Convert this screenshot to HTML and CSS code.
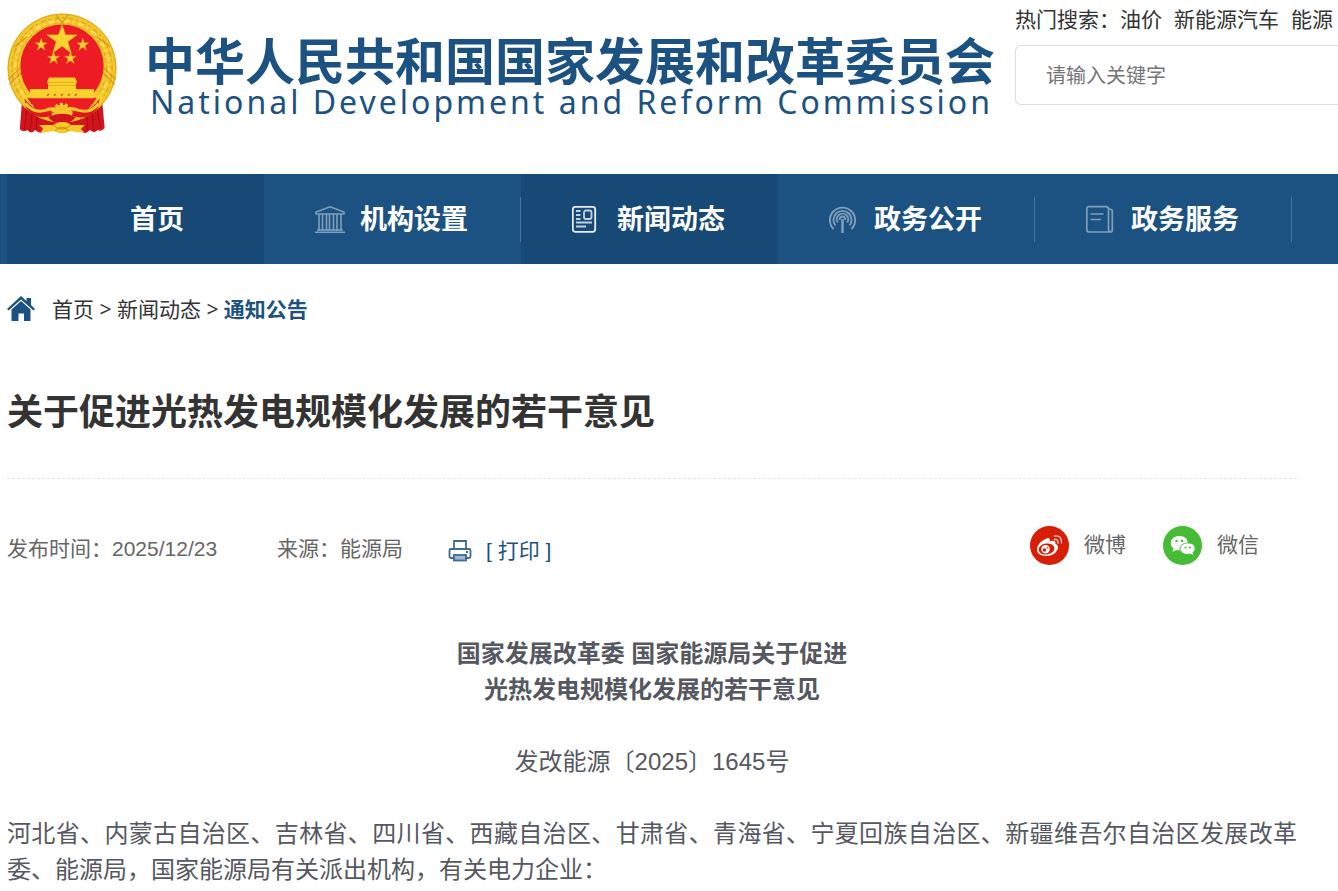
FILE: index.html
```html
<!DOCTYPE html>
<html lang="zh-CN">
<head>
<meta charset="utf-8">
<meta name="viewport" content="width=device-width, initial-scale=1">
<title>关于促进光热发电规模化发展的若干意见</title>
<link rel="stylesheet" href="styles.css">
</head>
<body>
<header class="header">
  <a class="brand" href="#">
    <svg class="emblem" viewBox="7 8 111 122" aria-hidden="true">
      <path d="M22 92 L19.500 125 Q23 129 27 126 Q31 131 35 126 Q39 130 43 128 L62 119 L82 128 Q86 131 90 126 Q95 130 98 126 Q102 128 105 124 L102 92Z" fill="#d3141d"/>
      <path d="M27 103 l-3 22 M32 107 l-2 20 M37 108 l-1 18 M97 103 l4 21 M92 107 l2 20 M87 108 l1 18" stroke="#a81016" stroke-width="1.2" fill="none"/>
      <circle cx="62" cy="63.500" r="55" fill="#f2c52c"/>
      <circle cx="62" cy="63.500" r="54.300" fill="none" stroke="#dfa921" stroke-width="1"/>
      <circle cx="62" cy="63.500" r="50.500" fill="none" stroke="#dba520" stroke-width="1.300" stroke-dasharray="2 4 5 3"/>
      <circle cx="62" cy="63.500" r="47.500" fill="none" stroke="#fadc55" stroke-width="2.500" stroke-dasharray="6 3 2 4"/>
      <circle cx="62" cy="63.500" r="45" fill="none" stroke="#dba520" stroke-width="1" stroke-dasharray="4 3"/>
      <path d="M8 75 L20 63 M9 80 L21 68 M116 75 L104 63 M115 80 L103 68 M14 42 L27 32 M110 42 L97 32 M56 10 L62 18 L68 10" stroke="#cf9a1a" stroke-width="1.200" fill="none"/>
      <circle cx="62" cy="61.500" r="42" fill="#ed1c24"/>
      <g fill="#fbd22f" stroke="#d99b1e" stroke-width=".4">
        <path d="M62 19 L65.600 30 H77.500 L68 37 L71.500 48.500 L62 41.500 L52.500 48.500 L56 37 L46.500 30 H58.400Z"/>
        <path id="star" d="M41 33.500 L42.500 38 H47 L43.300 40.800 L44.800 45.500 L41 42.500 L37 45.500 L38.600 40.800 L35 38 H39.500Z"/>
        <use href="#star" x="42" y="0"/>
        <use href="#star" x="12.500" y="13.500"/>
        <use href="#star" x="29.500" y="13.500"/>
      </g>
      <path d="M49 73 H75 L77 77 V79 H76 V85 H94 V91 H104 L101 99 H24 L21 91 H30 V85 H48 V79 H47 V77Z" fill="#fbd12d"/>
      <path d="M47 78 H77 M48 81 H76 M30 87 H94" stroke="#dba520" stroke-width=".8"/>
      <path d="M27 93.500 H97 L93 100 H31Z" fill="#ed1c24"/>
      <path d="M30 85 H94 V94 H30Z" fill="#fbd12d"/>
      <path d="M47 91.500 l2-2 m5 2 l2-2 m5 2 l2-2 m5 2 l2-2 m5 2 l2-2" stroke="#c9561b" stroke-width="1.300"/>
      <path d="M31 98 H93 L87 108 Q77 112 71 106 L53 106 Q45 113 36 107Z" fill="#ed1c24"/>
      <path d="M24 94 Q34 108 47 108 Q54 107 62 113 Q70 107 77 108 Q91 108 100 94 L98 104 Q88 117 74 112 Q67 114 62 118 Q57 114 50 112 Q34 116 26 104Z" fill="#dc171e"/>
      <circle cx="62" cy="109" r="8.500" fill="#f2c12a"/>
      <circle cx="62" cy="109" r="9" fill="none" stroke="#fbd22f" stroke-width="3" stroke-dasharray="3 2"/>
      <path d="M25 99 Q34 110 46 106 Q56 102 62 110 Q68 102 78 106 Q91 110 99 99" fill="none" stroke="#f6c928" stroke-width="3"/>
      <path d="M48 113 Q62 106 76 113 Q70 120 62 119 Q54 120 48 113Z" fill="#d3141d"/>
      <path d="M39 121 L53 121 Q58 117 62 118 Q67 117 71 121 L85 121 L81 125 L85 129 L70 127 Q62 132 54 127 L40 129 L43 125Z" fill="#f6c928"/>
      <path d="M53 121 Q62 129 71 121 M55 127 Q62 119 69 127" stroke="#cb8b16" fill="none"/>
    </svg>
    <span class="brand-names">
      <span class="brand-cn">中华人民共和国国家发展和改革委员会</span>
      <span class="brand-en" lang="en">National Development and Reform Commission</span>
    </span>
  </a>
  <form class="search" role="search">
    <div class="hot"><span>热门搜索：</span><a href="#">油价</a><a href="#">新能源汽车</a><a href="#">能源</a></div>
    <input class="search-input" type="search" placeholder="请输入关键字" aria-label="请输入关键字">
  </form>
</header>

<nav class="nav">
  <a class="nav-item active" href="#"><span class="nav-icon"></span>首页</a>
  <a class="nav-item" href="#">
    <svg class="nav-icon" viewBox="0 0 30 30" aria-hidden="true"><g fill="none" stroke="#7f9fbb" stroke-width="1.600"><path d="M1 9 V7 L15 1.800 L29 7 V9Z M0 27.200 H30 M4 9 V26 M7.500 9 V26 M11.500 9 V26 M14.500 9 V26 M18.500 9 V26 M22 9 V26 M26 9 V26 M2 25 H28"/></g></svg>机构设置</a>
  <a class="nav-item active" href="#">
    <svg class="nav-icon" viewBox="0 0 30 30" aria-hidden="true"><g fill="none" stroke="#c5d2de" stroke-width="1.800"><rect x="0.800" y="1.800" width="22.400" height="25" rx="2.500" stroke="#e8eef3"/><path d="M4 6 H8.500 M4 10 H8.500 M4 14 H8.500 M4 17.500 H20 M4 21.500 H14"/><rect x="12" y="5.500" width="7.500" height="8.500" rx="2"/></g></svg>新闻动态</a>
  <a class="nav-item" href="#">
    <svg class="nav-icon" viewBox="0 0 30 30" aria-hidden="true"><g fill="none" stroke="#7f9fbb" stroke-width="1.900"><path d="M4.500 24 A12.600 12.600 0 1 1 22.500 24 M6.500 20.500 A9 9 0 1 1 20.500 20.500 M8.800 17.500 A5.700 5.700 0 1 1 18.200 17.500 M10.800 15 A2.800 2.800 0 1 1 16.200 15"/><path d="M13.500 14 V28" stroke-width="2.500"/></g></svg>政务公开</a>
  <a class="nav-item" href="#">
    <svg class="nav-icon" viewBox="0 0 30 30" aria-hidden="true"><g fill="none" stroke="#7f9fbb" stroke-width="1.700"><path d="M3 1.700 H20 Q22.500 1.700 22.500 4.500 V24 Q22.500 27 25 27 H3 Q.8 27 .8 24.500 V4 Q.8 1.700 3 1.700Z M23 4 Q26.300 4 26.300 6 V25 Q26.300 27 24.500 27 M4.500 9 H17.500 M4.500 14.500 H15"/></g></svg>政务服务</a>
</nav>

<main class="page">
  <nav class="crumbs">
    <svg class="home" viewBox="0 0 28 26" aria-hidden="true"><path d="M0 13 L14 0 L19.500 5 V2 H24 V9 L28 13 L26.500 14.500 L14 3.500 L1.500 14.500Z M4.500 13.500 L14 5 L23.500 13.500 V25 H17 V17.500 H11.500 V25 H4.500Z" fill="#1c5281"/></svg>
    <span><a href="#">首页</a> &gt; <a href="#">新闻动态</a> &gt; <a class="current" href="#">通知公告</a></span>
  </nav>
  <h1 class="title">关于促进光热发电规模化发展的若干意见</h1>
  <div class="meta">
    <span>发布时间：2025/12/23</span>
    <span>来源：能源局</span>
    <button class="print" type="button">
      <svg class="printer" viewBox="0 0 24 22" aria-hidden="true"><g fill="none" stroke="#3d6b94" stroke-width="1.800"><path d="M6 9 V1 H18 V9"/><rect x="1.500" y="9" width="21" height="9" rx="1.500"/><rect x="6" y="15" width="12" height="5.500" fill="#9db8d2"/><path d="M18 12 H20"/></g></svg>
      <span>[ 打印 ]</span>
    </button>
    <div class="share">
      <a href="#"><svg class="share-icon" viewBox="0 0 39 39" aria-hidden="true"><circle cx="19.500" cy="19.500" r="19.500" fill="#d81e06"/><path d="M16.500 12.500 C19 11 20.500 13 19.500 15.500 C23 14 26 14.500 25.500 18 C29 19 28.500 23 26 26 C22 31 11.500 31 8 27 C4.500 22 10 15 16.500 12.500Z" fill="#fff"/><ellipse cx="16.500" cy="23" rx="8" ry="5.500" transform="rotate(-8 16.500 23)" fill="#d81e06"/><circle cx="15.500" cy="23.200" r="4.200" fill="#fff"/><circle cx="14.500" cy="24" r="1.800" fill="#d81e06"/><circle cx="17.500" cy="21.800" r=".8" fill="#d81e06"/><path d="M24.500 10 Q32 9 31.500 17 M24.500 13.500 Q28.500 13 28 17" fill="none" stroke="#fbd5cf" stroke-width="1.400" stroke-linecap="round"/></svg>微博</a>
      <a href="#"><svg class="share-icon" viewBox="0 0 39 39" aria-hidden="true"><circle cx="19.500" cy="19.500" r="19.500" fill="#46bb36"/><path d="M16.500 10 C23 10 25 14 24.500 17 C19 17 16 20 17 24.500 L13 24 L9.500 26 L10.500 22.500 C5 18 8 10 16.500 10Z" fill="#fff"/><path d="M24.500 17 C32.500 17 34 23 30 26.500 L30.500 29.500 L27.500 28 C21 29.500 17 26 17 23 C17 19.500 20.500 17 24.500 17Z" fill="#fff" stroke="#46bb36" stroke-width=".8"/><g fill="#46bb36"><circle cx="13.500" cy="15" r="1.200"/><circle cx="19" cy="15" r="1.200"/><circle cx="22.500" cy="21.500" r="1"/><circle cx="27" cy="21.500" r="1"/></g></svg>微信</a>
    </div>
  </div>
  <article class="article">
    <h2>国家发展改革委 国家能源局关于促进<br>光热发电规模化发展的若干意见</h2>
    <p class="number">发改能源〔2025〕1645号</p>
    <p class="body">河北省、内蒙古自治区、吉林省、四川省、西藏自治区、甘肃省、青海省、宁夏回族自治区、新疆维吾尔自治区发展改革委、能源局，国家能源局有关派出机构，有关电力企业：</p>
  </article>
</main>
</body>
</html>
```
FILE: styles.css
```css
* {
  box-sizing: border-box;
}

body {
  margin: 0;
  background: #fff;
  color: #333;
  font-family: "Liberation Sans", "Noto Sans CJK SC", sans-serif;
  font-size: 21px;
  line-height: 30px;
  overflow-x: hidden;
}

a {
  color: inherit;
  text-decoration: none;
}

.header {
  display: flex;
  padding: 0 0 40px 7px;
}

.brand {
  display: flex;
  flex: none;
  gap: 27px;
  width: 1008px;
  padding-top: 13px;
  color: #1c5281;
}

.emblem {
  flex: none;
  width: 111px;
  height: 121px;
}

.brand-names {
  display: flex;
  flex-direction: column;
  padding-top: 20px;
  white-space: nowrap;
}

.brand-cn {
  font-family: "Noto Sans CJK SC", sans-serif;
  font-size: 50px;
  font-weight: 700;
  line-height: 50px;
}

.brand-en {
  padding-left: 5px;
  font-family: "Noto Sans", sans-serif;
  font-size: 32px;
  line-height: 38px;
  letter-spacing: 3px;
}

.search {
  flex: 1;
  min-width: 0;
  padding-top: 5px;
}

.hot {
  display: flex;
  white-space: nowrap;
}

.hot a {
  margin-right: 12px;
}

.search-input {
  display: block;
  width: 100%;
  height: 60px;
  margin-top: 10px;
  padding: 0 30px 2px;
  border: 1px solid #ddd;
  border-right: 0;
  border-radius: 6px 0 0 6px;
  background: #fff;
  font: 20px "Noto Sans CJK SC", sans-serif;
  appearance: none;
}

.search-input::placeholder {
  color: #757575;
}

.nav {
  display: flex;
  height: 90px;
  padding-left: 7px;
  background: #1c5281;
}

.nav-item {
  display: flex;
  flex: none;
  align-items: center;
  justify-content: center;
  gap: 15px;
  width: 257px;
  padding: 1px 2px 0 0;
  background: linear-gradient(#4675a0, #4675a0) right center / 1px 45px no-repeat;
  color: #fff;
  font-size: 27px;
  font-weight: 700;
}

.nav-item.active {
  background: #164976;
}

.nav-icon {
  width: 30px;
  height: 30px;
}

.page {
  max-width: 1297px;
  padding-left: 7px;
}

.crumbs {
  display: flex;
  align-items: center;
  gap: 17px;
  padding-top: 30px;
  font-family: "Open Sans", "Noto Sans CJK SC", sans-serif;
}

.home {
  width: 28px;
  height: 26px;
}

.current {
  color: #1c5281;
  font-weight: 700;
}

.title {
  margin: 0;
  padding: 62px 0 38px;
  border-bottom: 1px dashed #e5e5e5;
  font-size: 36px;
  line-height: 54px;
}

.meta {
  display: flex;
  align-items: center;
  padding: 45px 38px 0 0;
  color: #666;
  white-space: nowrap;
}

.meta > span {
  margin-right: 60px;
  padding-top: 8px;
}

.meta > span + span {
  margin-right: 45px;
}

.print {
  display: flex;
  align-items: center;
  gap: 14px;
  padding: 12px 0 0;
  border: 0;
  background: none;
  color: #1c5281;
  font: inherit;
}

.printer {
  width: 24px;
  height: 22px;
}

.share {
  display: flex;
  gap: 37px;
  margin-left: auto;
}

.share a {
  display: flex;
  align-items: center;
  gap: 15px;
}

.share-icon {
  width: 39px;
  height: 39px;
}

.article {
  padding-top: 70px;
  color: #555860;
  font-size: 24px;
  line-height: 36px;
}

.article h2 {
  margin: 0 0 36px;
  font-size: 24px;
  text-align: center;
}

.article p {
  margin: 0 0 36px;
}

.article .number {
  text-align: center;
}

.article .body {
  margin: 0;
  text-align: justify;
}
```
